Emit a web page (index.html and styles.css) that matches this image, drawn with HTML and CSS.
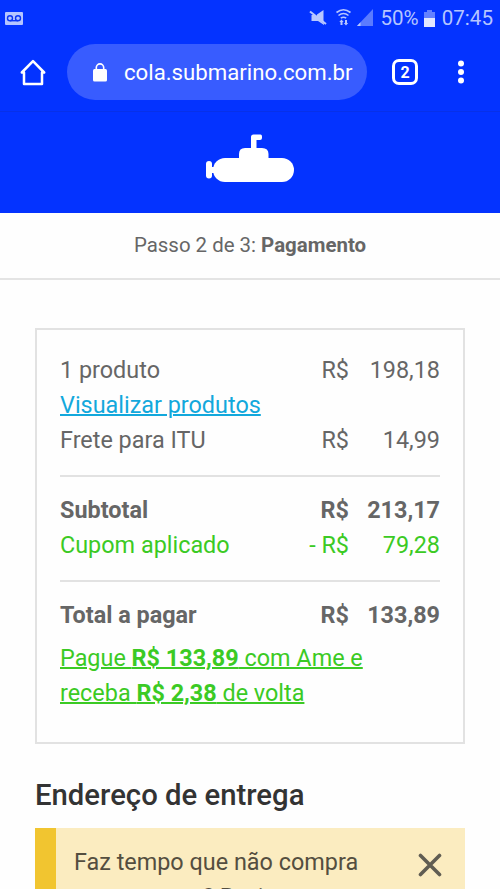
FILE: index.html
```html
<!DOCTYPE html>
<html lang="pt-BR">
<head>
<meta charset="utf-8">
<title>Pagamento</title>
<link rel="stylesheet" href="styles.css">
</head>
<body>
<div class="screen">
  <div class="status">
    <svg class="voicemail" width="18" height="13" viewBox="0 0 18 13"><rect width="18" height="13" rx="1" fill="#b5c5ff"/><g fill="none" stroke="#0a35f5" stroke-width="1.4"><circle cx="5" cy="6.2" r="2.500"/><circle cx="13" cy="6.2" r="2.500"/><path d="M5 8.700h8"/></g></svg>
    <svg width="70" height="20" viewBox="0 0 70 20">
      <path d="M8 6.500L14.500 2v12.500L8 9zM2.500 7H6l9 8.500v1.500l-6-4H2.500z" fill="#b8c7ff"/>
      <path d="M1 3.500L17 16" stroke="#b8c7ff" stroke-width="2"/>
      <g fill="none" stroke="#b8c7ff" stroke-width="1.600"><path d="M27.500 4.500q7-5.500 14 0M29.500 7.500q5-4 10 0M31.800 10.200q2.700-2 5.400 0"/></g>
      <path d="M32.500 11.500l2.200 2.500h-1.200v3h-2v-3h-1.200zM37 17.500l-2.200-2.500H36v-3h2v3h1.200z" fill="#b8c7ff"/>
      <path d="M64 1v17H48z" fill="#5b7bff"/><path d="M51.500 14.300V18H48z" fill="#b8c7ff"/>
    </svg>
    <span class="percent">50%</span>
    <svg width="11" height="17" viewBox="0 0 11 17"><path d="M3 0h5v2h3v7H0V2h3z" fill="#6482ff"/><path d="M0 8h11v9H0z" fill="#e3e8ff"/></svg>
    <span class="clock">07:45</span>
  </div>
  <div class="toolbar">
    <svg class="home" width="26" height="27" viewBox="0 0 26 27" fill="none" stroke="#fff" stroke-width="2.500" stroke-linejoin="round" stroke-linecap="round"><path d="M1.800 13.500L13 2.200l11.200 11.300h-2.200V25H4V13.500z"/></svg>
    <div class="address">
      <svg width="16" height="19" viewBox="0 0 16 19"><rect x="1" y="6" width="14" height="12.500" rx="1.500" fill="#fff"/><path d="M4.300 7V4.600a3.700 3.700 0 0 1 7.400 0V7" fill="none" stroke="#fff" stroke-width="1.600"/></svg>
      <span>cola.submarino.com.br</span>
    </div>
    <div class="tabs">2</div>
    <svg class="dots" width="8" height="24" viewBox="0 0 8 24" fill="#fff"><circle cx="4" cy="3.500" r="3"/><circle cx="4" cy="12" r="3"/><circle cx="4" cy="20.500" r="3"/></svg>
  </div>
  <header class="brand">
    <svg width="90" height="50" viewBox="0 0 90 50" fill="#fff"><rect x="8" y="24" width="81" height="24" rx="12"/><path d="M34 26v-6q0-6 6-6h6V3q0-2.500 2.500-2.500h7q1.500 0 1.500 2v1.500q0 2-2 2H51.500V14H57q6.500 0 6.500 6v6z"/><rect x="1" y="27" width="6" height="17.500" rx="3"/><rect x="5" y="33" width="6" height="6"/></svg>
  </header>
  <div class="step"><p>Passo 2 de 3: <b>Pagamento</b></p></div>
  <main>
    <section class="summary">
      <div class="row"><span>1 produto</span><span class="cur">R$</span><span class="val">198,18</span></div>
      <div class="row"><a class="view">Visualizar produtos</a></div>
      <div class="row"><span>Frete para ITU</span><span class="cur">R$</span><span class="val">14,99</span></div>
      <hr>
      <div class="row strong"><span>Subtotal</span><span class="cur">R$</span><span class="val">213,17</span></div>
      <div class="row coupon"><span>Cupom aplicado</span><span class="cur">- R$</span><span class="val">79,28</span></div>
      <hr>
      <div class="row strong"><span>Total a pagar</span><span class="cur">R$</span><span class="val">133,89</span></div>
      <a class="ame">Pague <b>R$ 133,89</b> com Ame e<br>receba <b>R$ 2,38</b> de volta</a>
    </section>
    <h1>Endereço de entrega</h1>
    <div class="notice">
      <p>Faz tempo que não compra<br>com a gente? Revise</p>
      <svg width="24" height="24" viewBox="0 0 24 24" stroke="#605d52" stroke-width="3.600" stroke-linecap="round"><path d="M2.500 2.500l19 19M21.500 2.500l-19 19"/></svg>
    </div>
  </main>
</div>
</body>
</html>
```
FILE: styles.css
```css
* { box-sizing: border-box; }
body { margin: 0; font-family: Roboto, sans-serif; color: #666; background: #fefefe; }
.screen { height: 889px; overflow: hidden; }
p, h1 { margin: 0; }
svg { display: block; flex: none; }
.status { height: 36px; background: #0433ff; display: flex; align-items: center; padding: 0 7px 0 5px; color: #b5c5ff; font-size: 20.6px; white-space: nowrap; }
.voicemail { margin-right: auto; }
.percent { margin: 0 5px 0 1px; }
.clock { margin-left: 7px; }
.toolbar { height: 75px; background: #0433ff; display: flex; align-items: center; padding: 0 35px 3px 20px; }
.address { width: 300px; height: 56px; margin-left: 21px; border-radius: 28px; background: #385cff; display: flex; align-items: center; padding-left: 25px; gap: 16px; color: #fff; font-size: 22.2px; white-space: nowrap; }
.tabs { width: 26px; height: 26px; margin-left: 25px; border: 3px solid #fff; border-radius: 7px; color: #fff; font: bold 16px/21px Roboto, sans-serif; text-align: center; }
.dots { margin-left: auto; }
.brand { height: 102px; background: #0433ff; border-top: 1px solid #0830e8; display: flex; justify-content: center; padding-top: 22px; }
.step { height: 67px; padding-bottom: 2px; border-bottom: 2px solid #e4e4e4; display: flex; align-items: center; justify-content: center; font-size: 20.45px; }
main { padding: 48px 35px 0; }
.summary { height: 416px; border: 2px solid #e2e2e2; padding: 24px 23px 0 23px; font-size: 23.4px; }
.row { height: 35px; line-height: 33px; display: flex; white-space: nowrap; }
.cur { margin-left: auto; }
.val { width: 91px; text-align: right; }
.strong { font-weight: bold; }
.coupon { color: #3bca24; }
a { text-decoration: underline; text-decoration-thickness: 2px; }
.view { color: #12a8dc; }
hr { border: 0; height: 2px; background: #e2e2e2; margin: 16px 0 17px; }
.ame { display: block; margin-top: 7px; line-height: 35px; color: #3bca24; white-space: nowrap; }
h1 { margin-top: 33px; font-size: 29.3px; line-height: 36px; font-weight: 500; color: #333; }
.notice { margin-top: 15px; height: 100px; background: #fbecc0; border-left: 21px solid #f1c530; padding: 17px 23px 0 18px; display: flex; justify-content: space-between; font-size: 23.4px; line-height: 35px; color: #544e3f; white-space: nowrap; }
.notice svg { margin-top: 8px; }
```
